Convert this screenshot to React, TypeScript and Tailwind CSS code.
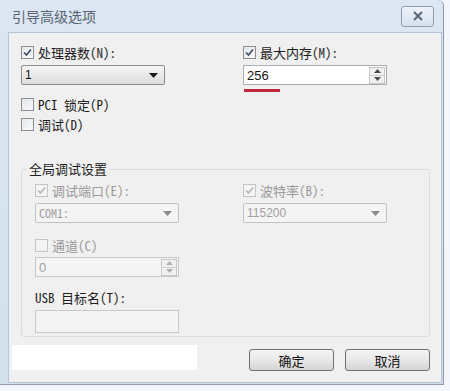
import React from 'react'

const cjk = '"Noto Sans Mono CJK SC", "Liberation Mono", "Noto Sans CJK SC", monospace'
const sans = '"Liberation Sans", "Noto Sans CJK SC", sans-serif'

const Check = ({ checked, disabled }: { checked?: boolean; disabled?: boolean }) => (
  <span
    className={`flex h-[13px] w-[13px] shrink-0 items-center justify-center border ${
      disabled ? 'border-[#c4c4c4] bg-[#f4f4f4]' : 'border-[#8e8f8f] bg-gradient-to-br from-[#e2e6ec] to-[#fafafa]'
    }`}
  >
    {checked && (
      <svg width="9" height="9" viewBox="0 0 9 9">
        <path
          d="M1 4.5 L3.5 7 L8 1.5"
          fill="none"
          stroke={disabled ? '#b8b8b8' : '#3c4a6a'}
          strokeWidth="1.6"
        />
      </svg>
    )}
  </span>
)

const CheckRow = ({
  label,
  checked,
  disabled,
}: {
  label: string
  checked?: boolean
  disabled?: boolean
}) => (
  <div className="flex h-[13px] items-center gap-[4px]">
    <Check checked={checked} disabled={disabled} />
    <span
      className={`text-[13px] leading-none ${disabled ? 'text-[#9a9a9a]' : 'text-[#1e1e1e]'}`}
      style={{ fontFamily: cjk }}
    >
      {label}
    </span>
  </div>
)

const Select = ({ value, disabled, mono }: { value: string; disabled?: boolean; mono?: boolean }) => (
  <div
    className={`flex h-[20px] w-[144px] items-center justify-between rounded-[2px] border pl-[3px] pr-[6px] ${
      disabled
        ? 'border-[#c2c2c2] bg-[#f4f4f4] text-[#a0a0a0]'
        : 'border-[#8c8c8c] bg-gradient-to-b from-[#f6f6f6] to-[#dcdcdc] text-[#111]'
    }`}
  >
    <span className="text-[12px] leading-none" style={{ fontFamily: mono ? cjk : sans }}>
      {value}
    </span>
    <svg width="9" height="5" viewBox="0 0 9 5">
      <path d="M0 0 H9 L4.5 5 Z" fill={disabled ? '#8a8a8a' : '#1a1a1a'} />
    </svg>
  </div>
)

const Spin = ({ value, disabled, w }: { value: string; disabled?: boolean; w: string }) => (
  <div
    className={`flex h-[20px] items-center border ${w} ${
      disabled ? 'border-[#c8c8c8] bg-[#f4f4f4] text-[#a0a0a0]' : 'border-[#abadb3] bg-white text-[#111]'
    }`}
  >
    <span className="flex-1 pl-[3px] text-[13px] leading-none" style={{ fontFamily: sans }}>
      {value}
    </span>
    <div className="mr-[1px] flex h-[17px] w-[16px] flex-col border border-[#c6c6c6] bg-[#f0f0f0]">
      <div className="flex flex-1 items-center justify-center border-b border-[#d0d0d0]">
        <svg width="7" height="4" viewBox="0 0 7 4">
          <path d="M0 4 H7 L3.5 0 Z" fill={disabled ? '#b0b0b0' : '#4a4a4a'} />
        </svg>
      </div>
      <div className="flex flex-1 items-center justify-center">
        <svg width="7" height="4" viewBox="0 0 7 4">
          <path d="M0 0 H7 L3.5 4 Z" fill={disabled ? '#b0b0b0' : '#4a4a4a'} />
        </svg>
      </div>
    </div>
  </div>
)

const Button = ({ label }: { label: string }) => (
  <div className="flex h-[22px] w-[85px] items-center justify-center rounded-[3px] border border-[#707070] bg-gradient-to-b from-[#f4f4f4] via-[#e8e8e8] to-[#d4d4d4]">
    <span className="text-[13px] leading-none text-[#111]" style={{ fontFamily: cjk }}>
      {label}
    </span>
  </div>
)

export default function App() {
  return (
    <div className="h-[391px] w-[450px] bg-[#f3f6fa]">
      <div className="h-[385px] w-[444px] rounded-tr-[6px] border-r border-b border-[#8e9cab] bg-gradient-to-b from-[#dce7f3] to-[#d3dfec]">
        <div className="flex h-[32px] items-center justify-between pl-[12px] pr-[9px]">
          <span className="text-[14px] text-[#5a6470]" style={{ fontFamily: '"Noto Sans CJK SC", sans-serif' }}>
            引导高级选项
          </span>
          <div className="flex h-[21px] w-[33px] items-center justify-center rounded-[3px] border border-[#8f9db0] bg-gradient-to-b from-[#eef3f9] to-[#d6e1ee]">
            <svg width="12" height="10" viewBox="0 0 12 10">
              <path d="M2 1 L10 9 M10 1 L2 9" stroke="#5d6a7a" strokeWidth="2.2" />
            </svg>
          </div>
        </div>
        <div className="ml-[8px] h-[351px] w-[434px] border border-[#b8c5d3] bg-[#f0f0f0]">
          <div className="flex pl-[12px] pt-[13px]">
            <div className="flex w-[222px] flex-col">
              <CheckRow label="处理器数(N):" checked />
              <div className="mt-[6px]">
                <Select value="1" />
              </div>
              <div className="mt-[13px] flex flex-col gap-[7px]">
                <CheckRow label="PCI 锁定(P)" />
                <CheckRow label="调试(D)" />
              </div>
            </div>
            <div className="flex flex-col">
              <CheckRow label="最大内存(M):" checked />
              <div className="mt-[6px]">
                <Spin value="256" w="w-[144px]" />
              </div>
              <div className="ml-[1px] mt-[4px] h-[3px] w-[36px] bg-[#c0283c]" />
            </div>
          </div>

          <div className="relative ml-[12px] mt-[38px] h-[168px] w-[409px] rounded-[3px] border border-[#d9dee5]">
            <span
              className="absolute left-[5px] top-[-8px] bg-[#f0f0f0] px-[2px] text-[13px] leading-none text-[#1e1e1e]"
              style={{ fontFamily: '"Noto Sans CJK SC", sans-serif' }}
            >
              全局调试设置
            </span>
            <div className="flex pl-[13px] pt-[14px]">
              <div className="flex w-[208px] flex-col">
                <CheckRow label="调试端口(E):" checked disabled />
                <div className="mt-[6px]">
                  <Select value="COM1:" disabled mono />
                </div>
                <div className="mt-[16px]">
                  <CheckRow label="通道(C)" disabled />
                </div>
                <div className="mt-[5px]">
                  <Spin value="0" disabled w="w-[144px]" />
                </div>
                <span className="mt-[14px] text-[13px] leading-none text-[#1e1e1e]" style={{ fontFamily: cjk }}>
                  USB 目标名(T):
                </span>
                <div className="mt-[6px] h-[23px] w-[144px] border border-[#c8c8c8] bg-[#f4f4f4]" />
              </div>
              <div className="flex flex-col">
                <CheckRow label="波特率(B):" checked disabled />
                <div className="mt-[6px]">
                  <Select value="115200" disabled />
                </div>
              </div>
            </div>
          </div>

          <div className="mt-[8px] flex items-start">
            <div className="ml-[3px] h-[25px] w-[185px] bg-white" />
            <div className="ml-[52px] mt-[4px] flex gap-[11px]">
              <Button label="确定" />
              <Button label="取消" />
            </div>
          </div>
        </div>
      </div>
    </div>
  )
}
